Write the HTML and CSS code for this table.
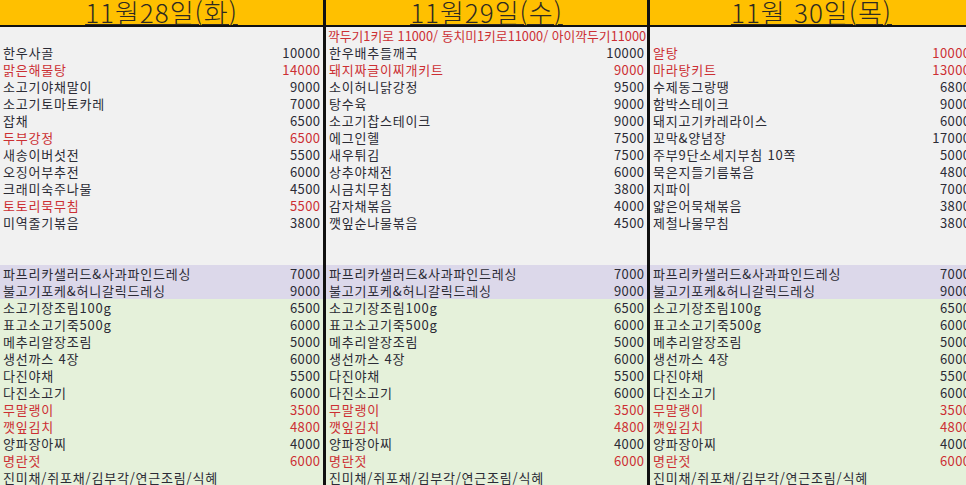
FILE: index.html
```html
<!DOCTYPE html>
<html lang="ko">
<head>
<meta charset="utf-8">
<link rel="stylesheet" href="styles.css">
</head>
<body>
<div class="sheet">
  <section class="day">
    <div class="head"><span>11월28일(화)</span></div>
    <div class="row"></div>
    <div class="row"><span>한우사골</span><span class="num">10000</span></div>
    <div class="row red"><span>맑은해물탕</span><span class="num">14000</span></div>
    <div class="row"><span>소고기야채말이</span><span class="num">9000</span></div>
    <div class="row"><span>소고기토마토카레</span><span class="num">7000</span></div>
    <div class="row"><span>잡채</span><span class="num">6500</span></div>
    <div class="row red"><span>두부강정</span><span class="num">6500</span></div>
    <div class="row"><span>새송이버섯전</span><span class="num">5500</span></div>
    <div class="row"><span>오징어부추전</span><span class="num">6000</span></div>
    <div class="row"><span>크래미숙주나물</span><span class="num">4500</span></div>
    <div class="row red"><span>토토리묵무침</span><span class="num">5500</span></div>
    <div class="row"><span>미역줄기볶음</span><span class="num">3800</span></div>
    <div class="row"></div>
    <div class="row"></div>
    <div class="row purple"><span>파프리카샐러드&amp;사과파인드레싱</span><span class="num">7000</span></div>
    <div class="row purple"><span>불고기포케&amp;허니갈릭드레싱</span><span class="num">9000</span></div>
    <div class="row green"><span>소고기장조림100g</span><span class="num">6500</span></div>
    <div class="row green"><span>표고소고기죽500g</span><span class="num">6000</span></div>
    <div class="row green"><span>메추리알장조림</span><span class="num">5000</span></div>
    <div class="row green"><span>생선까스 4장</span><span class="num">6000</span></div>
    <div class="row green"><span>다진야채</span><span class="num">5500</span></div>
    <div class="row green"><span>다진소고기</span><span class="num">6000</span></div>
    <div class="row green red"><span>무말랭이</span><span class="num">3500</span></div>
    <div class="row green red"><span>깻잎김치</span><span class="num">4800</span></div>
    <div class="row green"><span>양파장아찌</span><span class="num">4000</span></div>
    <div class="row green red"><span>명란젓</span><span class="num">6000</span></div>
    <div class="row green"><span>진미채/쥐포채/김부각/연근조림/식혜</span></div>
  </section>
  <section class="day">
    <div class="head"><span>11월29일(수)</span></div>
    <div class="row red note"><span>깍두기1키로 11000/ 동치미1키로11000/ 아이깍두기11000</span></div>
    <div class="row"><span>한우배추들깨국</span><span class="num">10000</span></div>
    <div class="row red"><span>돼지짜글이찌개키트</span><span class="num">9000</span></div>
    <div class="row"><span>소이허니닭강정</span><span class="num">9500</span></div>
    <div class="row"><span>탕수육</span><span class="num">9000</span></div>
    <div class="row"><span>소고기찹스테이크</span><span class="num">9000</span></div>
    <div class="row"><span>에그인헬</span><span class="num">7500</span></div>
    <div class="row"><span>새우튀김</span><span class="num">7500</span></div>
    <div class="row"><span>상추야채전</span><span class="num">6000</span></div>
    <div class="row"><span>시금치무침</span><span class="num">3800</span></div>
    <div class="row"><span>감자채볶음</span><span class="num">4000</span></div>
    <div class="row"><span>깻잎순나물볶음</span><span class="num">4500</span></div>
    <div class="row"></div>
    <div class="row"></div>
    <div class="row purple"><span>파프리카샐러드&amp;사과파인드레싱</span><span class="num">7000</span></div>
    <div class="row purple"><span>불고기포케&amp;허니갈릭드레싱</span><span class="num">9000</span></div>
    <div class="row green"><span>소고기장조림100g</span><span class="num">6500</span></div>
    <div class="row green"><span>표고소고기죽500g</span><span class="num">6000</span></div>
    <div class="row green"><span>메추리알장조림</span><span class="num">5000</span></div>
    <div class="row green"><span>생선까스 4장</span><span class="num">6000</span></div>
    <div class="row green"><span>다진야채</span><span class="num">5500</span></div>
    <div class="row green"><span>다진소고기</span><span class="num">6000</span></div>
    <div class="row green red"><span>무말랭이</span><span class="num">3500</span></div>
    <div class="row green red"><span>깻잎김치</span><span class="num">4800</span></div>
    <div class="row green"><span>양파장아찌</span><span class="num">4000</span></div>
    <div class="row green red"><span>명란젓</span><span class="num">6000</span></div>
    <div class="row green"><span>진미채/쥐포채/김부각/연근조림/식혜</span></div>
  </section>
  <section class="day">
    <div class="head"><span>11월 30일(목)</span></div>
    <div class="row"></div>
    <div class="row red"><span>알탕</span><span class="num">10000</span></div>
    <div class="row red"><span>마라탕키트</span><span class="num">13000</span></div>
    <div class="row"><span>수제동그랑땡</span><span class="num">6800</span></div>
    <div class="row"><span>함박스테이크</span><span class="num">9000</span></div>
    <div class="row"><span>돼지고기카레라이스</span><span class="num">6000</span></div>
    <div class="row"><span>꼬막&amp;양념장</span><span class="num">17000</span></div>
    <div class="row"><span>주부9단소세지부침 10쪽</span><span class="num">5000</span></div>
    <div class="row"><span>묵은지들기름볶음</span><span class="num">4800</span></div>
    <div class="row"><span>지파이</span><span class="num">7000</span></div>
    <div class="row"><span>얇은어묵채볶음</span><span class="num">3800</span></div>
    <div class="row"><span>제철나물무침</span><span class="num">3800</span></div>
    <div class="row"></div>
    <div class="row"></div>
    <div class="row purple"><span>파프리카샐러드&amp;사과파인드레싱</span><span class="num">7000</span></div>
    <div class="row purple"><span>불고기포케&amp;허니갈릭드레싱</span><span class="num">9000</span></div>
    <div class="row green"><span>소고기장조림100g</span><span class="num">6500</span></div>
    <div class="row green"><span>표고소고기죽500g</span><span class="num">6000</span></div>
    <div class="row green"><span>메추리알장조림</span><span class="num">5000</span></div>
    <div class="row green"><span>생선까스 4장</span><span class="num">6000</span></div>
    <div class="row green"><span>다진야채</span><span class="num">5500</span></div>
    <div class="row green"><span>다진소고기</span><span class="num">6000</span></div>
    <div class="row green red"><span>무말랭이</span><span class="num">3500</span></div>
    <div class="row green red"><span>깻잎김치</span><span class="num">4800</span></div>
    <div class="row green"><span>양파장아찌</span><span class="num">4000</span></div>
    <div class="row green red"><span>명란젓</span><span class="num">6000</span></div>
    <div class="row green"><span>진미채/쥐포채/김부각/연근조림/식혜</span></div>
  </section>
</div>
</body>
</html>
```

FILE: styles.css
```css
html, body {
  margin: 0;
  padding: 0;
  width: 966px;
  height: 485px;
  overflow: hidden;
  background: #f1f1f1;
}

.sheet {
  display: grid;
  grid-template-columns: 323px 324px 326px;
  width: 973px;
  font-family: "Noto Sans CJK KR", "Noto Sans", sans-serif;
  color: #2b2b35;
}

.day {
  display: flex;
  flex-direction: column;
  background: #f1f1f1;
  min-width: 0;
}

.day + .day {
  border-left: 3px solid #111;
}

.head {
  height: 25px;
  background: #ffc000;
  border-bottom: 2px solid #111;
  text-align: center;
  font-size: 26px;
  font-weight: 300;
  line-height: 24px;
  letter-spacing: 1px;
  color: #2e2a22;
  white-space: nowrap;
}

.head span {
  text-decoration: underline;
  text-decoration-thickness: 1px;
  text-underline-offset: 1px;
}

.row {
  height: 17px;
  display: flex;
  justify-content: space-between;
  align-items: center;
  padding: 0 3px 0 3px;
  font-size: 13px;
  line-height: 17px;
  letter-spacing: 0.8px;
  white-space: nowrap;
  overflow: hidden;
}

.num {
  letter-spacing: 0.4px;
  margin-right: -0.4px;
}

.row.red {
  color: #cc2f33;
}

.row.note {
  padding: 0 1px 0 2px;
  font-size: 12.8px;
  letter-spacing: 0;
}

.row.purple {
  background: #dcd8ea;
}

.row.green {
  background: #e5f1da;
}
```
